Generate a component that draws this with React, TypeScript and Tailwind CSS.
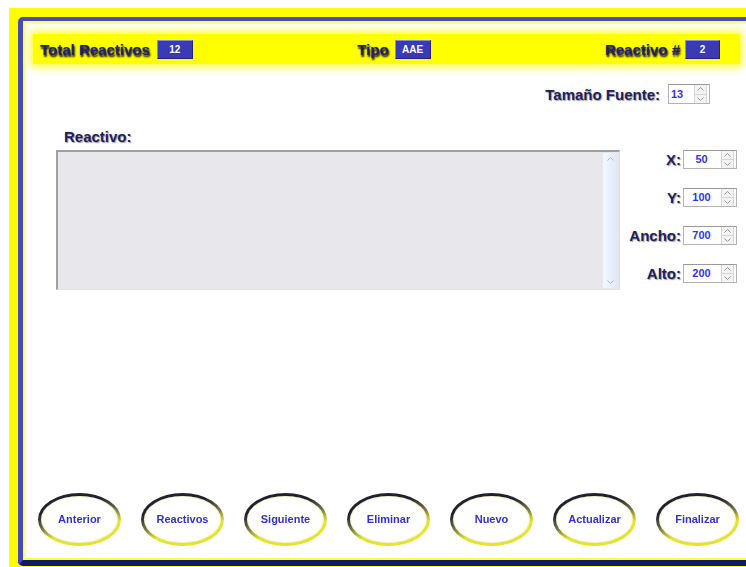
import React from 'react';

const FONT = "font-['Liberation_Sans',Arial,sans-serif]";

function Chevron({ up, className }: { up?: boolean; className?: string }) {
  return (
    <svg width="7" height="4" viewBox="0 0 7 4" className={className}>
      <polyline
        points={up ? '0.5,3.5 3.5,0.5 6.5,3.5' : '0.5,0.5 3.5,3.5 6.5,0.5'}
        fill="none"
        stroke="currentColor"
        strokeWidth="1"
      />
    </svg>
  );
}

function ValueBox({ value, width }: { value: string; width: string }) {
  return (
    <div
      className={`flex h-[19px] ${width} items-center justify-center border border-t-[#8a8ae0] border-l-[#8a8ae0] border-r-[#23237a] border-b-[#23237a] bg-[#3a3ab4] text-[10px] font-bold text-white`}
    >
      {value}
    </div>
  );
}

function Spinner({
  value,
  width,
  height = 'h-[19px]',
  align = 'center',
}: {
  value: string;
  width: string;
  height?: string;
  align?: 'left' | 'center';
}) {
  return (
    <div
      className={`flex ${height} ${width} border border-[#b4b4b4] border-t-[#9a9a9a] bg-white`}
    >
      <div
        className={`flex flex-1 items-center text-[11px] font-bold text-[#3434e0] ${
          align === 'left' ? 'justify-start pl-[2px]' : 'justify-center'
        }`}
      >
        {value}
      </div>
      <div className="mx-[2px] flex w-[13px] flex-col border-x border-[#d6d6d6] bg-[#f3f3f3] text-[#9a9a9a]">
        <div className="flex flex-1 items-center justify-center border-b border-[#d6d6d6]">
          <Chevron up />
        </div>
        <div className="flex flex-1 items-center justify-center">
          <Chevron />
        </div>
      </div>
    </div>
  );
}

function Field({ label, value }: { label: string; value: string }) {
  return (
    <div className="flex h-[19px] items-center gap-[2px]">
      <span className="text-[15px] leading-[19px] font-bold text-[#1e1e5e] [text-shadow:1px_1px_1px_#9a9a9a]">
        {label}
      </span>
      <Spinner value={value} width="w-[54px]" />
    </div>
  );
}

function OvalButton({ label }: { label: string }) {
  return (
    <div className="relative h-[53px] w-[83px] shrink-0 rounded-[50%] bg-[linear-gradient(165deg,#202030_30%,#6b6b4a_48%,#e4e42c_66%)] p-[3px] blur-[0.4px]">
      <div className="flex h-full w-full items-center justify-center rounded-[50%] bg-white shadow-[inset_0_0_2px_#d8d860]">
        <span className="text-[11px] font-bold text-[#3131cc]">{label}</span>
      </div>
    </div>
  );
}

const buttons = [
  'Anterior',
  'Reactivos',
  'Siguiente',
  'Eliminar',
  'Nuevo',
  'Actualizar',
  'Finalizar',
];

export default function App() {
  return (
    <div className={`h-[567px] w-[746px] overflow-hidden bg-white pl-[9px] pt-[8px] ${FONT}`}>
      <div className="h-full bg-[#ffff00] pl-[9px] pt-[9px]">
        <div className="flex h-[549px] w-[740px] flex-col rounded-[5px] border-t-4 border-r-[5px] border-b-[6px] border-l-[5px] border-[#4848c0] border-b-[#16166a] bg-white shadow-[inset_2px_2px_0_#ffff70,inset_0_-2px_0_#ffff40]">
          {/* header bar */}
          <div className="mt-[13px] mr-[13px] ml-[10px] flex h-[30px] items-center justify-between bg-[#ffff00] pr-[20px] pl-[7px] shadow-[0_0_8px_3px_#ffff30]">
            <div className="flex items-center gap-[7px]">
              <span className="text-[15px] leading-[19px] font-bold text-[#202078] [text-shadow:1px_2px_2px_#000]">
                Total Reactivos
              </span>
              <ValueBox value="12" width="w-[36px]" />
            </div>
            <div className="mr-[10px] flex items-center gap-[6px]">
              <span className="text-[15px] leading-[19px] font-bold text-[#202078] [text-shadow:1px_2px_2px_#000]">
                Tipo
              </span>
              <ValueBox value="AAE" width="w-[36px]" />
            </div>
            <div className="flex items-center gap-[5px]">
              <span className="text-[15px] leading-[19px] font-bold text-[#202078] [text-shadow:1px_2px_2px_#000]">
                Reactivo #
              </span>
              <ValueBox value="2" width="w-[35px]" />
            </div>
          </div>

          {/* font size */}
          <div className="mt-[20px] mr-[43px] flex h-[20px] items-center justify-end gap-[8px]">
            <span className="text-[15px] leading-[19px] font-bold text-[#1e1e5e] [text-shadow:1px_1px_1px_#9a9a9a]">
              Tamaño Fuente:
            </span>
            <Spinner value="13" width="w-[42px]" height="h-[20px]" align="left" />
          </div>

          <div className="mt-[24px] ml-[41px] text-[15px] leading-[17px] font-bold text-[#1e1e5e] [text-shadow:1px_1px_1px_#9a9a9a]">
            Reactivo:
          </div>

          <div className="mt-[5px] flex items-start">
            {/* question text area */}
            <div className="ml-[33px] flex h-[140px] w-[564px] border-t-2 border-l-2 border-[#a0a0a0] border-r-[#dcdcdc] border-b-[#e4e4e4] border-r border-b bg-[#e8e7eb]">
              <div className="flex-1" />
              <div className="my-[1px] flex w-[14px] flex-col items-center justify-between bg-[linear-gradient(90deg,#f4f8ff,#dfe9fa)] py-[4px] text-[#a8b8d0]">
                <Chevron up />
                <Chevron />
              </div>
              <div className="w-[2px]" />
            </div>

            {/* position and size */}
            <div className="mr-[16px] ml-auto flex flex-col items-end gap-[19px]">
              <Field label="X:" value="50" />
              <Field label="Y:" value="100" />
              <Field label="Ancho:" value="700" />
              <Field label="Alto:" value="200" />
            </div>
          </div>

          {/* navigation */}
          <div className="mt-auto mb-[14px] ml-[15px] flex gap-[20px]">
            {buttons.map((b) => (
              <OvalButton key={b} label={b} />
            ))}
          </div>
        </div>
      </div>
    </div>
  );
}
